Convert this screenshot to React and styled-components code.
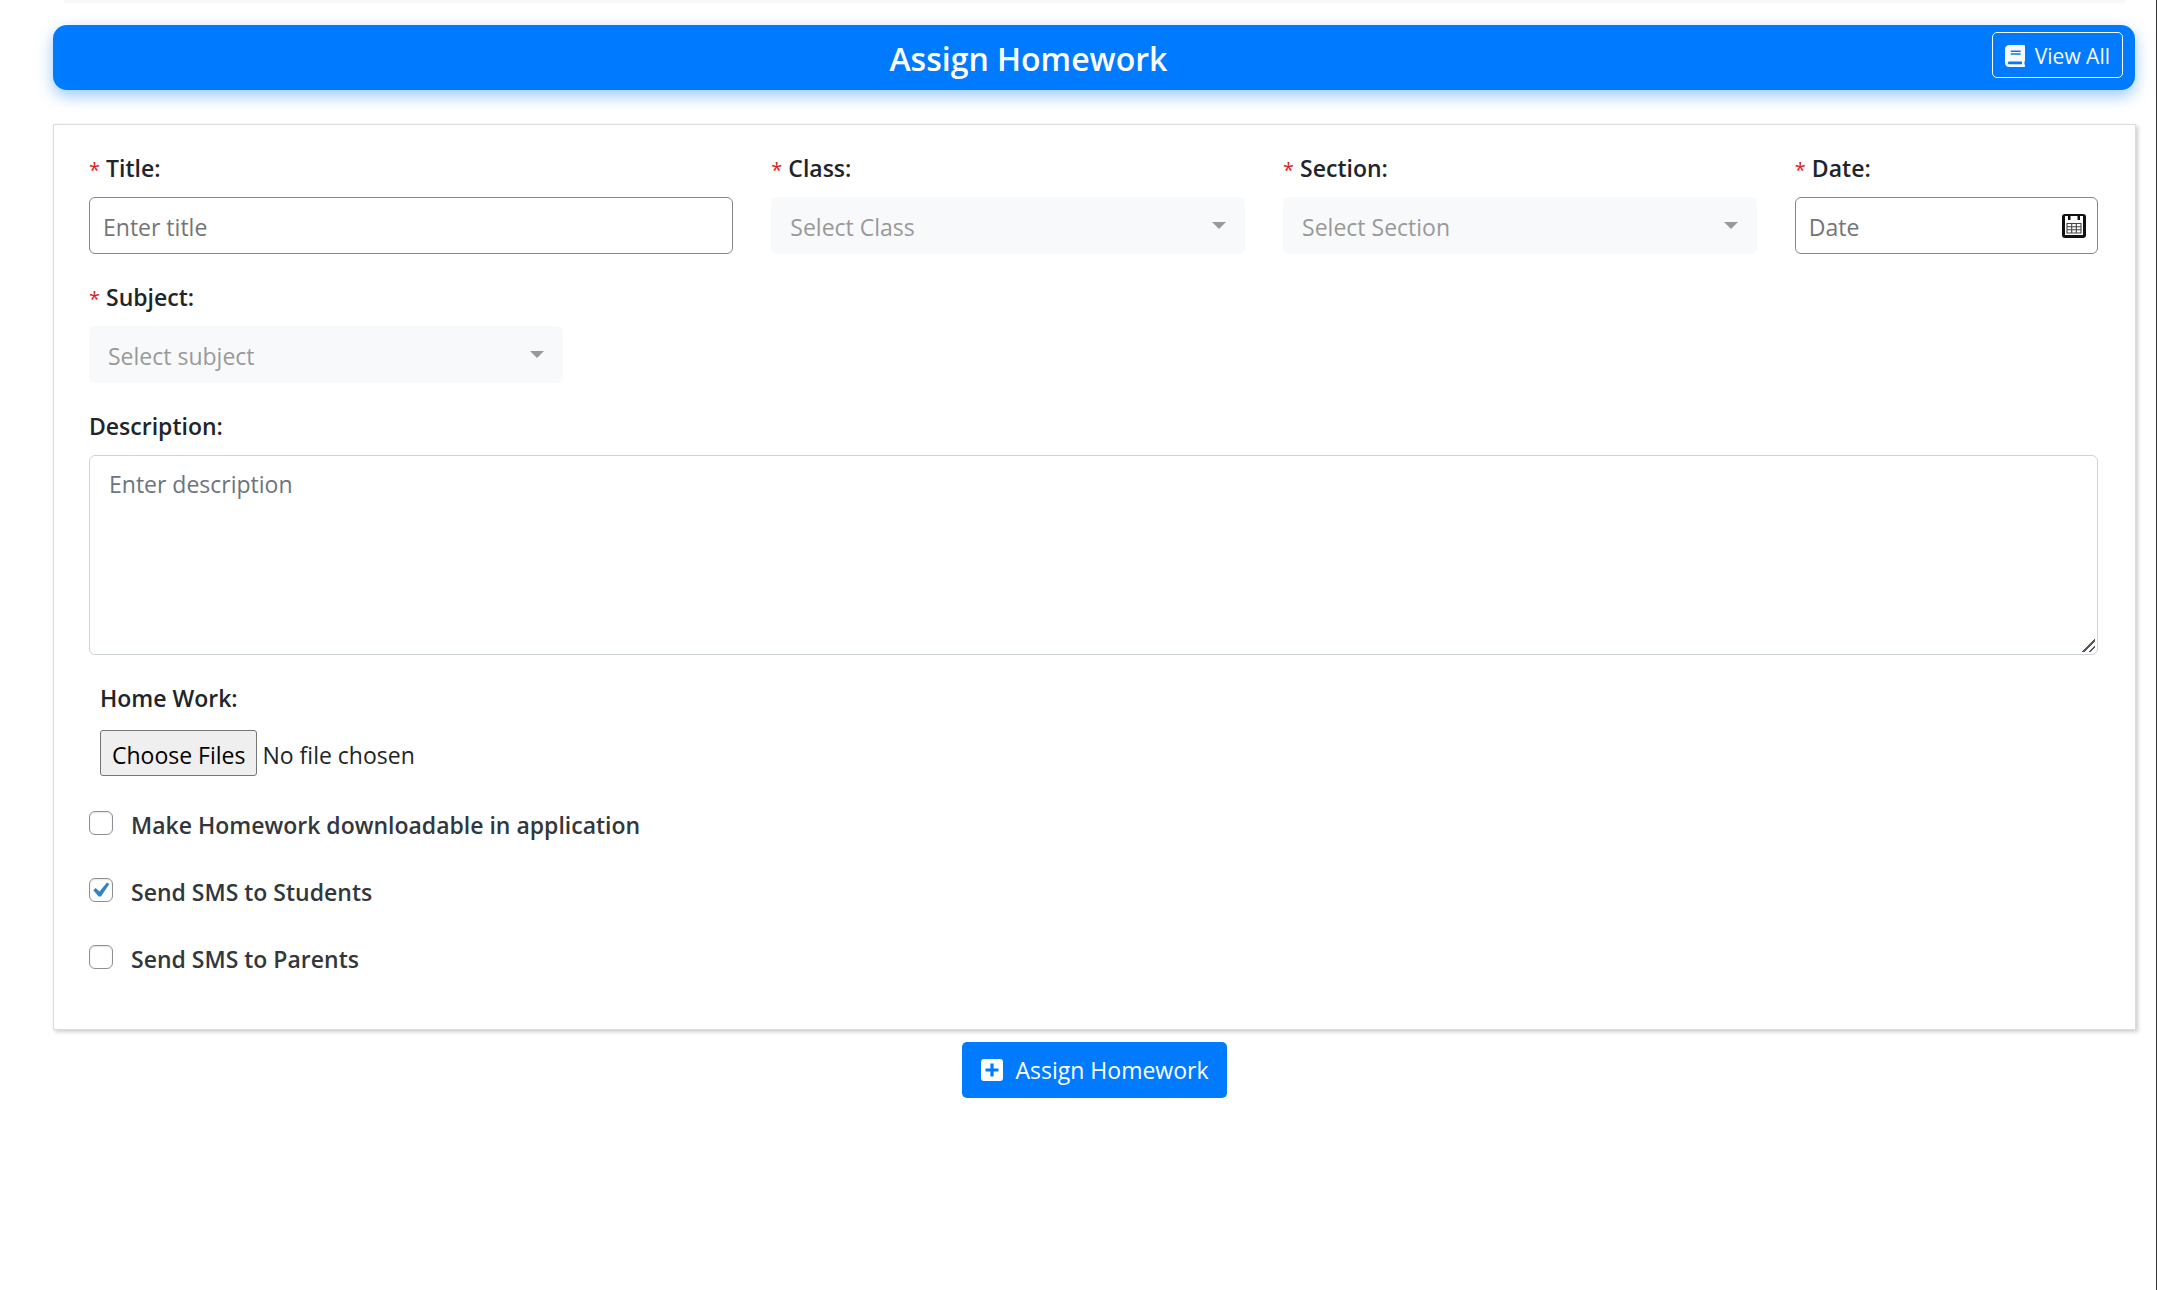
import React from "react";
import styled, { createGlobalStyle, css } from "styled-components";

const GlobalStyle = createGlobalStyle`
  *, *::before, *::after { box-sizing: border-box; }
  body {
    margin: 0;
    background: #fff;
    color: #212529;
    font-family: "Open Sans", "Noto Sans", sans-serif;
    font-size: 23px;
    line-height: 36px;
  }
  input, button, textarea, select { font: inherit; color: inherit; }
`;

const Page = styled.div`
  min-height: 100vh;
  padding: 0 20px 0 53px;
  border-right: 1px solid #333;
  background: #fff;
`;

const PreviousPanel = styled.div`
  height: 3px;
  margin: 0 10px 22px;
  border-radius: 0 0 14px 14px;
  background: #f7f8fa;
`;

const TitleBar = styled.header`
  display: flex;
  align-items: flex-start;
  height: 65px;
  margin-right: 1px;
  padding: 7px 12px 0;
  border-radius: 14px;
  background: #007bff;
  color: #fff;
  box-shadow: 0 6px 16px rgba(0, 123, 255, 0.4);
`;

const PageTitle = styled.h1`
  flex: 1;
  margin: 0;
  font-size: 32px;
  font-weight: 600;
  line-height: 54px;
  text-align: center;
`;

const ViewAll = styled.a`
  display: flex;
  align-items: center;
  gap: 10px;
  height: 46px;
  padding: 1px 12px 0;
  border: 1px solid #f8f9fa;
  border-radius: 5px;
  color: #f8f9fa;
  font-size: 21px;
  text-decoration: none;
`;

const Card = styled.section`
  margin-top: 34px;
  padding: 25px 37px 52px 35px;
  border: 1px solid #dcdcdc;
  background: #fff;
  box-shadow: 2px 2px 4px rgba(0, 0, 0, 0.2);
`;

const Fields = styled.div`
  display: grid;
  grid-template-columns: repeat(12, 1fr);
  column-gap: 38px;
  row-gap: 25px;
`;

const Field = styled.div`
  grid-column: span ${(p) => p.$span};
  display: flex;
  flex-direction: column;
  gap: 11px;
`;

const Label = styled.label`
  font-weight: 600;
`;

const Required = styled.span`
  margin-right: 6px;
  color: #e01b1b;
  font-size: 20px;
  font-weight: 400;
  line-height: 20px;
`;

const control = css`
  width: 100%;
  height: 57px;
  border-radius: 6px;
  outline: none;
`;

const TextInput = styled.input`
  ${control}
  padding: 2px 13px 0;
  border: 1px solid #858585;
  background: #fff;
  &::placeholder { color: #757575; opacity: 1; }
`;

const SelectBox = styled.div`
  display: grid;
  align-items: center;
  > * { grid-area: 1 / 1; }
  > svg { justify-self: end; margin-right: 19px; pointer-events: none; }
`;

const Select = styled.select`
  ${control}
  padding: 2px 19px 0;
  border: 0;
  background: #f8f9fa;
  color: #999;
  appearance: none;
`;

const DateBox = styled(SelectBox)`
  > svg { margin-right: 12px; }
`;

const TextArea = styled.textarea`
  ${control}
  display: block;
  height: 200px;
  padding: 10px 19px;
  border: 1px solid #ced4da;
  background: #fff;
  resize: vertical;
  &::placeholder { color: #6c757d; opacity: 1; }
  &::-webkit-resizer {
    background: linear-gradient(
      135deg,
      transparent 49%, #555 50%, #555 58%, transparent 59%,
      transparent 73%, #555 74%, #555 82%, transparent 83%
    ) 0 0 / 13px 13px no-repeat;
  }
`;

const FileField = styled.div`
  display: flex;
  flex-direction: column;
  gap: 14px;
  margin: 25px 11px 0;
`;

const FileInput = styled.input`
  height: 46px;
  line-height: 44px;
  &::file-selector-button {
    height: 46px;
    margin: 0 5px 0 0;
    padding: 2px 11px 0;
    border: 1px solid #767676;
    border-radius: 3px;
    background: #efefef;
    color: #000;
    font: inherit;
  }
`;

const Options = styled.div`
  display: flex;
  flex-direction: column;
  gap: 31px;
  margin-top: 31px;
`;

const Option = styled.label`
  display: flex;
  align-items: flex-start;
  gap: 18px;
  color: #32373c;
  font-weight: 600;
`;

const TickBox = styled.span`
  display: grid;
  width: 24px;
  height: 24px;
  margin-top: 4px;
  > * { grid-area: 1 / 1; }
  > svg { display: none; place-self: center; pointer-events: none; }
  > input:checked + svg { display: block; }
`;

const Tick = styled.input`
  width: 24px;
  height: 24px;
  margin: 0;
  border: 1px solid #8c8f94;
  border-radius: 6px;
  background: #fff;
  box-shadow: inset 0 1px 2px rgba(0, 0, 0, 0.1);
  appearance: none;
`;

const Actions = styled.div`
  display: flex;
  justify-content: center;
  padding-top: 12px;
`;

const Submit = styled.button`
  display: flex;
  align-items: center;
  gap: 13px;
  height: 56px;
  padding: 0 19px;
  border: 0;
  border-radius: 5px;
  background: #007bff;
  color: #fff;
`;

const BookIcon = () => (
  <svg width="20" height="22" viewBox="0 0 448 512" preserveAspectRatio="none" fill="currentColor" aria-hidden="true">
    <path d="M448 360V24c0-13.300-10.700-24-24-24H96C43 0 0 43 0 96v320c0 53 43 96 96 96h328c13.300 0 24-10.700 24-24v-16c0-7.500-3.500-14.300-8.900-18.700-4.200-15.400-4.200-59.300 0-74.700 5.400-4.300 8.900-11.100 8.900-18.600zM128 134c0-3.300 2.700-6 6-6h212c3.300 0 6 2.700 6 6v20c0 3.300-2.700 6-6 6H134c-3.300 0-6-2.700-6-6v-20zm0 64c0-3.300 2.700-6 6-6h212c3.300 0 6 2.700 6 6v20c0 3.300-2.700 6-6 6H134c-3.300 0-6-2.700-6-6v-20zm253.400 250H96c-17.700 0-32-14.300-32-32 0-17.600 14.400-32 32-32h285.400c-1.900 17.100-1.900 46.900 0 64z" />
  </svg>
);

const PlusSquareIcon = () => (
  <svg width="22" height="22" viewBox="0 0 22 22" aria-hidden="true">
    <rect width="22" height="22" rx="3" fill="#fff" />
    <path d="M11 4.500v13M4.500 11h13" stroke="#007bff" strokeWidth="3.200" />
  </svg>
);

const CaretIcon = () => (
  <svg width="14" height="7" viewBox="0 0 14 7" aria-hidden="true">
    <path d="M0 0h14L7 7z" fill="#999" />
  </svg>
);

const CheckIcon = () => (
  <svg width="24" height="24" viewBox="0 0 24 24" aria-hidden="true">
    <path d="M18 4.500l2.300 1.600L12 18.500H9.600L4.300 12.200l2.300-2.200 3.900 3.500z" fill="#3582c4" />
  </svg>
);

const CalendarIcon = () => (
  <svg width="24" height="24" viewBox="0 0 24 24" aria-hidden="true">
    <rect width="24" height="24" rx="3" fill="#111" />
    <path d="M3 2h3v4h2.500V2h7v4H18V2h3v19H3z" fill="#fff" />
    <path d="M5 9.500h14v9.500H5zM5 12.700h14M5 15.800h14M9.700 9.500V19M14.300 9.500V19" fill="none" stroke="#444" strokeWidth="1.100" />
  </svg>
);

const FieldLabel = ({ id, required, children }) => (
  <Label htmlFor={id}>
    {required && <Required>*</Required>}
    {children}
  </Label>
);

const SelectField = ({ id, label, placeholder }) => (
  <Field $span={3}>
    <FieldLabel id={id} required>{label}</FieldLabel>
    <SelectBox>
      <Select id={id} defaultValue="">
        <option value="">{placeholder}</option>
      </Select>
      <CaretIcon />
    </SelectBox>
  </Field>
);

const options = [
  { id: "downloadable", text: "Make Homework downloadable in application", on: false },
  { id: "sms-students", text: "Send SMS to Students", on: true },
  { id: "sms-parents", text: "Send SMS to Parents", on: false },
];

export default function App() {
  return (
    <Page>
      <GlobalStyle />
      <PreviousPanel />
      <TitleBar>
        <PageTitle>Assign Homework</PageTitle>
        <ViewAll href="#all"><BookIcon />View All</ViewAll>
      </TitleBar>
      <form onSubmit={(e) => e.preventDefault()}>
        <Card>
          <Fields>
            <Field $span={4}>
              <FieldLabel id="title" required>Title:</FieldLabel>
              <TextInput id="title" placeholder="Enter title" />
            </Field>
            <SelectField id="class" label="Class:" placeholder="Select Class" />
            <SelectField id="section" label="Section:" placeholder="Select Section" />
            <Field $span={2}>
              <FieldLabel id="date" required>Date:</FieldLabel>
              <DateBox>
                <TextInput id="date" placeholder="Date" />
                <CalendarIcon />
              </DateBox>
            </Field>
            <SelectField id="subject" label="Subject:" placeholder="Select subject" />
            <Field $span={12}>
              <FieldLabel id="description">Description:</FieldLabel>
              <TextArea id="description" placeholder="Enter description" />
            </Field>
          </Fields>
          <FileField>
            <FieldLabel id="files">Home Work:</FieldLabel>
            <FileInput id="files" type="file" multiple />
          </FileField>
          <Options>
            {options.map((o) => (
              <Option key={o.id} htmlFor={o.id}>
                <TickBox>
                  <Tick id={o.id} type="checkbox" defaultChecked={o.on} />
                  <CheckIcon />
                </TickBox>
                {o.text}
              </Option>
            ))}
          </Options>
        </Card>
        <Actions>
          <Submit type="submit"><PlusSquareIcon />Assign Homework</Submit>
        </Actions>
      </form>
    </Page>
  );
}
